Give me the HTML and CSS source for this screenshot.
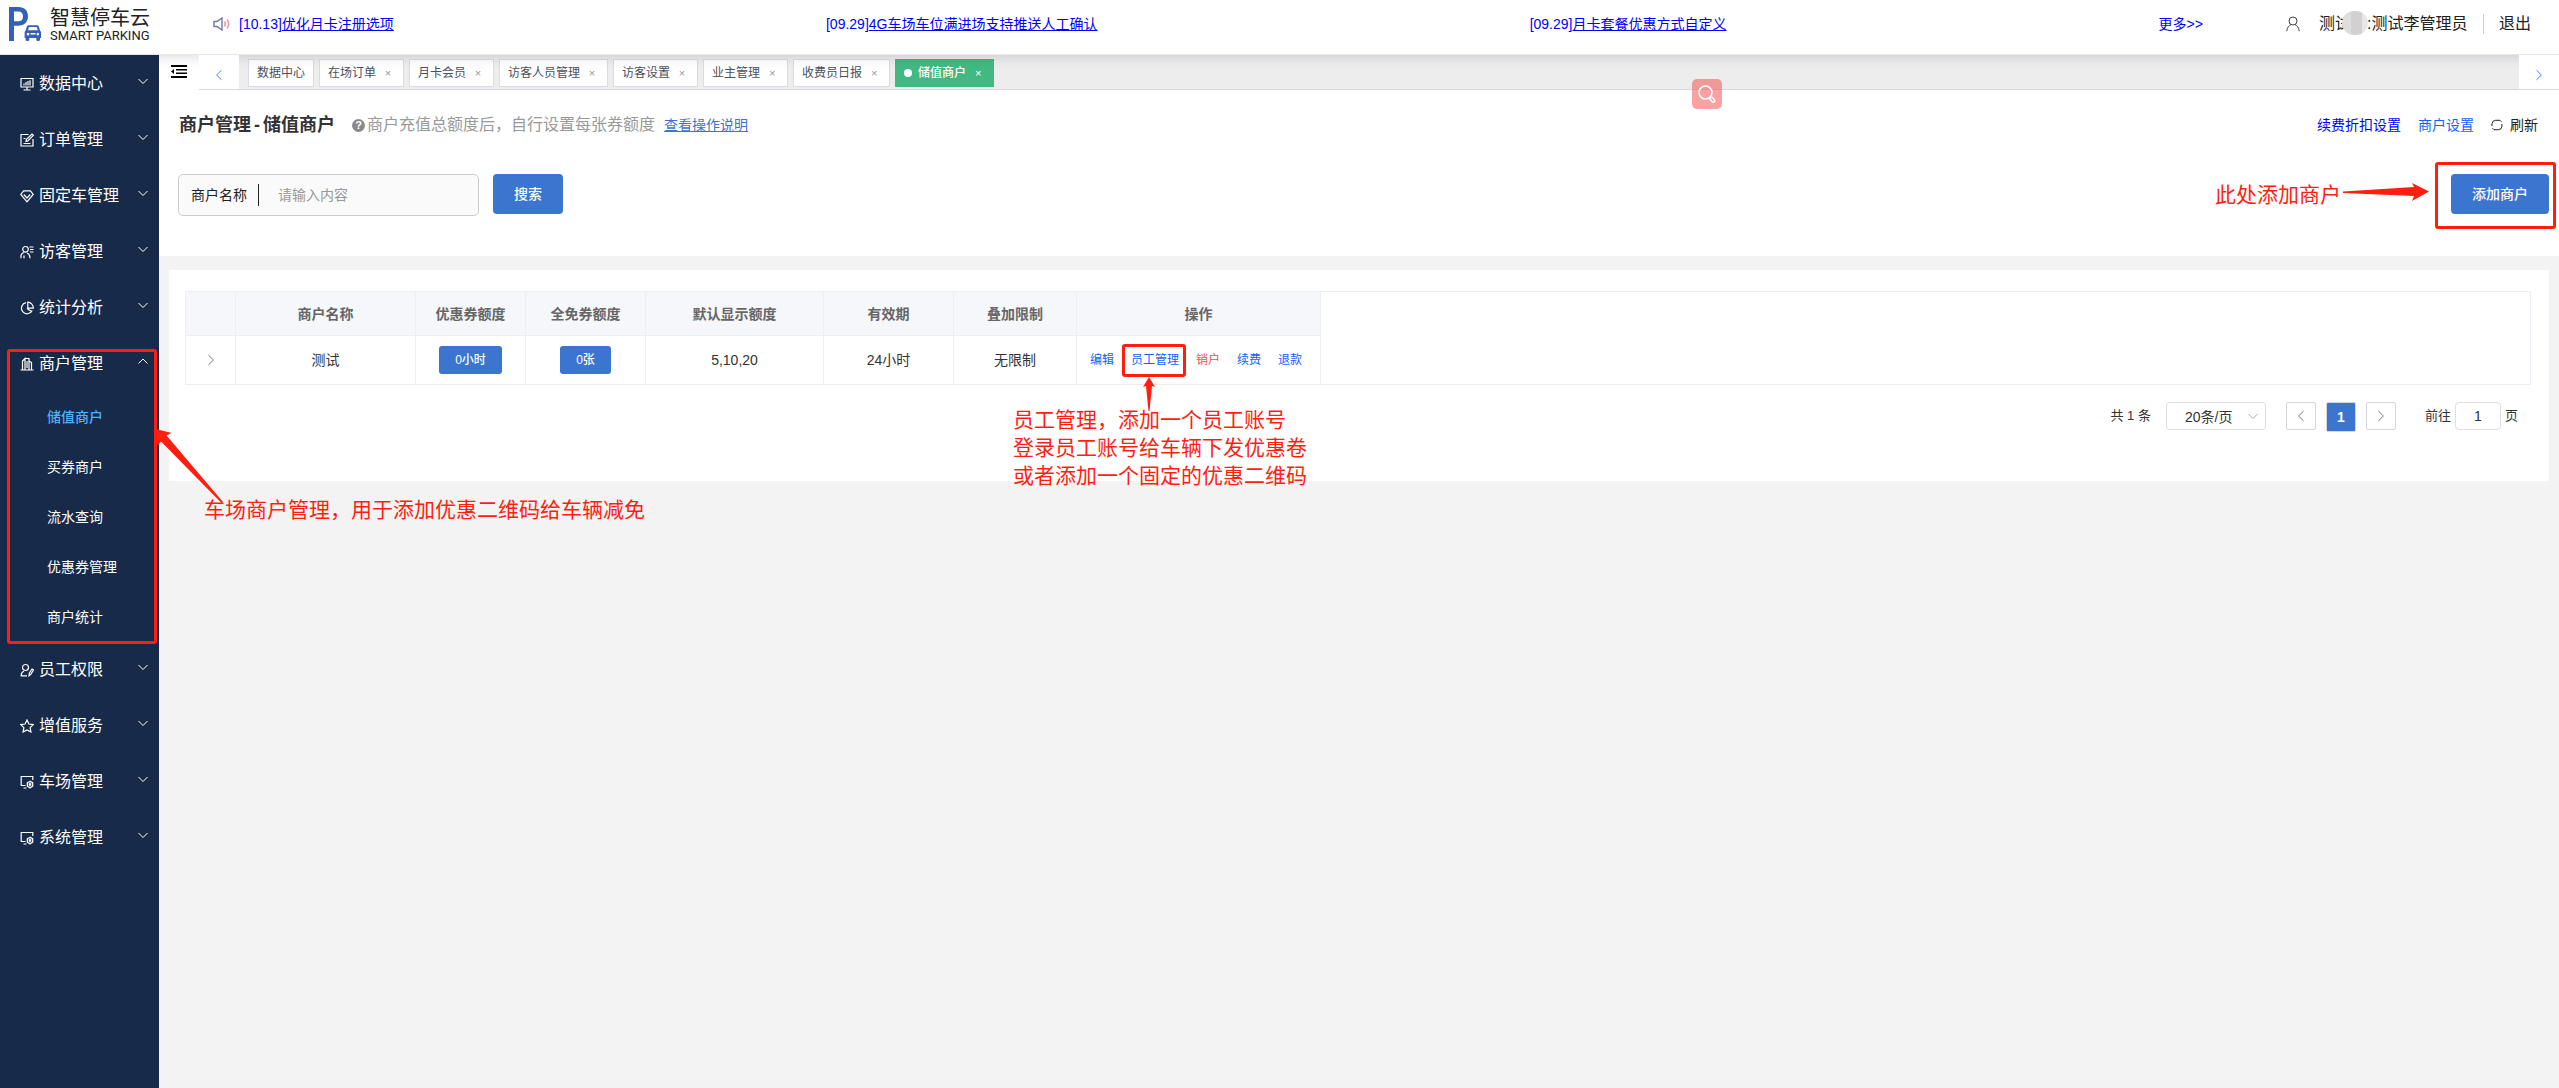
FILE: index.html
```html
<!DOCTYPE html>
<html lang="zh-CN">
<head>
<meta charset="utf-8">
<title>智慧停车云 - 储值商户</title>
<link rel="stylesheet" href="styles.css">
</head>
<body>
<svg class="defs" aria-hidden="true">
  <symbol id="down" viewBox="0 0 12 12"><path d="M1.500 4l4.500 4.500L10.500 4"/></symbol>
  <symbol id="up" viewBox="0 0 12 12"><path d="M1.500 8.500L6 4l4.500 4.500"/></symbol>
  <symbol id="left" viewBox="0 0 12 12"><path d="M8.500 1.200L3.600 6l4.900 4.800"/></symbol>
  <symbol id="right" viewBox="0 0 12 12"><path d="M3.500 1.200L8.400 6l-4.900 4.800"/></symbol>
  <symbol id="gearscreen" viewBox="0 0 14 14"><path d="M5.500 10.500H1.200V1.500h11.600V5M3.500 13h3"/><circle cx="10" cy="9.500" r="2.800"/><circle cx="10" cy="9.500" r="0.800"/><path d="M10 5.800v1M10 12.200v1.200M6.800 7.600l.9.500M12.300 10.900l.9.500M6.800 11.400l.9-.5M12.300 8.100l.9-.5"/></symbol>
</svg>

<header class="header">
  <a class="logo" href="#">
    <svg class="logo-mark" viewBox="0 0 32 34" aria-hidden="true">
      <path fill="#3560b8" fill-rule="evenodd" d="M0 0h9.500C15.500 0 19 3.500 19 9.300s-3.800 9.500-9.800 9.500H5V34H0zM5 4.600v9.700h4.200c3.200 0 4.800-1.700 4.800-4.900S12.300 4.600 9.200 4.600z"/>
      <path fill="#3560b8" fill-rule="evenodd" d="M19.500 18.200h8.600c.8 0 1.400.4 1.700 1.200l1.200 4.100c.7.500 1 1.200 1 2V31h-1v1.800c0 .7-.5 1.200-1.200 1.200h-1.300c-.7 0-1.200-.5-1.200-1.200V31h-7v1.800c0 .7-.5 1.200-1.200 1.200h-1.300c-.7 0-1.200-.5-1.200-1.200V31h-1v-5.500c0-.8.400-1.500 1.100-2l1.200-4.100c.3-.8.800-1.200 1.600-1.200zm.5 1.800l-1 3.300h9.800l-1-3.300zm-1 5.800a1.300 1.300 0 1 0 .01 0zm9.800 0a1.300 1.300 0 1 0 .01 0zM21.500 26v1.500h5V26z"/>
    </svg>
    <span class="logo-text"><span class="logo-cn">智慧停车云</span><span class="logo-en">SMART PARKING</span></span>
  </a>
  <svg class="speaker" viewBox="0 0 18 14" aria-hidden="true">
    <path fill="none" stroke="#7077b0" stroke-width="1.400" d="M1 4.500h3L9 1v12L4 9.500H1z"/>
    <path fill="none" stroke="#f29a9a" stroke-width="1.600" d="M11.500 4.500q1.600 2.500 0 5M14 2.500q3.200 4.500 0 9"/>
  </svg>
  <nav class="notices">
    <a href="#">[10.13]<u>优化月卡注册选项</u></a>
    <a href="#">[09.29]<u>4G车场车位满进场支持推送人工确认</u></a>
    <a href="#">[09.29]<u>月卡套餐优惠方式自定义</u></a>
    <a href="#">更多&gt;&gt;</a>
  </nav>
  <div class="account">
    <svg class="user-icon" viewBox="0 0 14 16" aria-hidden="true"><circle cx="7" cy="5" r="4"/><path d="M.8 15.200C1 11.500 3 9.300 5.200 8.600M13.200 15.200C13 11.500 11 9.300 8.800 8.600"/></svg>
    <span class="user-name">测试<span class="mask"></span>:测试李管理员</span>
    <a class="logout" href="#">退出</a>
  </div>
</header>

<div class="body">
  <aside class="sidebar">
    <nav>
      <a class="item" href="#"><svg class="icon" viewBox="0 0 14 14"><path d="M1 1.500h12v8.500H1zM3.500 13h7M7 10v3M4 8.500V6.500M6 8.500V5M8 8.500V4M10 8.500V3.200"/></svg>数据中心<svg class="caret"><use href="#down"/></svg></a>
      <a class="item" href="#"><svg class="icon" viewBox="0 0 14 14"><path d="M8.500 1.500H1v11.500h12V6M6 8.500l.3-2L12 1l1.400 1.300L7.800 8zM3.500 10.500h7M3.500 5.500h2"/></svg>订单管理<svg class="caret"><use href="#down"/></svg></a>
      <a class="item" href="#"><svg class="icon" viewBox="0 0 14 14"><path d="M3.600 1.800h6.800L13.200 5.500 7 12.800.8 5.500zM3.800 5.500L7 9l3.200-3.500"/></svg>固定车管理<svg class="caret"><use href="#down"/></svg></a>
      <a class="item" href="#"><svg class="icon" viewBox="0 0 14 14"><circle cx="5.500" cy="4.300" r="2.800"/><path d="M1 13.200V11q0-2.500 2.800-3.500M7 8.200q3 .8 3 5M9.500 2h4M10 4.500h3.500M10 7h3.500M4 10.500v2.700"/></svg>访客管理<svg class="caret"><use href="#down"/></svg></a>
      <a class="item" href="#"><svg class="icon" viewBox="0 0 14 14"><path d="M6 1.700A5.600 5.600 0 1 0 12.200 9.500M7.800 1.200v6h5.500A5.700 5.700 0 0 0 7.800 1.200zM7 7.500l4.800 3.300"/></svg>统计分析<svg class="caret"><use href="#down"/></svg></a>
      <div class="group">
        <a class="item" href="#"><svg class="icon" viewBox="0 0 14 14"><path d="M.5 13h13M2.500 13V4L5 1.500V13M5 1.500h4V13M9 4l2.500 1.500V13M7 4v7"/></svg>商户管理<svg class="caret"><use href="#up"/></svg></a>
        <a class="sub active" href="#">储值商户</a>
        <a class="sub" href="#">买券商户</a>
        <a class="sub" href="#">流水查询</a>
        <a class="sub" href="#">优惠券管理</a>
        <a class="sub" href="#">商户统计</a>
        <span class="frame frame-menu"></span>
        <svg class="arrow arrow-menu" viewBox="0 0 67 74"><path d="M0 0l15.500 4-5 2.500L67 73l-1.500 1L5 12.500 1.500 17z"/></svg>
        <p class="note note-menu">车场商户管理，用于添加优惠二维码给车辆减免</p>
      </div>
      <a class="item" href="#"><svg class="icon" viewBox="0 0 14 14"><circle cx="5.500" cy="4.500" r="3"/><path d="M7 12.800H1.200Q1 9.500 4 8M9 12.800l.3-2.500 2.700-4.300 1.500 1-2.700 4.400z"/></svg>员工权限<svg class="caret"><use href="#down"/></svg></a>
      <a class="item" href="#"><svg class="icon" viewBox="0 0 14 14"><path d="M7 1l1.900 4 4.400.6-3.200 3 .8 4.400L7 10.900 3.100 13l.8-4.400-3.200-3L5.100 5z"/></svg>增值服务<svg class="caret"><use href="#down"/></svg></a>
      <a class="item" href="#"><svg class="icon"><use href="#gearscreen"/></svg>车场管理<svg class="caret"><use href="#down"/></svg></a>
      <a class="item" href="#"><svg class="icon"><use href="#gearscreen"/></svg>系统管理<svg class="caret"><use href="#down"/></svg></a>
    </nav>
  </aside>

  <main class="main">
    <div class="tagbar">
      <button class="fold" type="button" aria-label="折叠菜单"><svg viewBox="0 0 16 13"><path fill="#000" d="M0 0h16v2H0zM5 4h11v1.500H5zM5 7.500h11V9H5zM0 11h16v2H0zM0 6.500L3 4v5z"/></svg></button>
      <button class="scroll" type="button" aria-label="向左"><svg class="chev"><use href="#left"/></svg></button>
      <div class="tags">
        <a class="tag" href="#">数据中心</a>
        <a class="tag" href="#">在场订单<span class="x">×</span></a>
        <a class="tag" href="#">月卡会员<span class="x">×</span></a>
        <a class="tag" href="#">访客人员管理<span class="x">×</span></a>
        <a class="tag" href="#">访客设置<span class="x">×</span></a>
        <a class="tag" href="#">业主管理<span class="x">×</span></a>
        <a class="tag" href="#">收费员日报<span class="x">×</span></a>
        <a class="tag current" href="#">储值商户<span class="x">×</span></a>
      </div>
      <button class="scroll" type="button" aria-label="向右"><svg class="chev"><use href="#right"/></svg></button>
      <button class="lens" type="button" aria-label="搜图"><svg viewBox="0 0 18 18"><circle cx="7.500" cy="7.500" r="6.500"/><path d="M12 12.500q1.500-1 2.500 0l2 2.500q.6 1.500-.6 2.200-1.300.4-2-.7l-2-2.500z"/></svg></button>
    </div>

    <section class="top">
      <div class="title-row">
        <h1>商户管理<span class="dash">-</span>储值商户</h1>
        <span class="help">?</span>
        <span class="hint">商户充值总额度后，自行设置每张券额度</span>
        <a class="doc" href="#">查看操作说明</a>
        <div class="tools">
          <a class="renew" href="#">续费折扣设置</a>
          <a class="setup" href="#">商户设置</a>
          <button class="refresh" type="button"><svg viewBox="0 0 12 12"><path d="M1 7V4.800Q1.300 1.500 4.500 1.300H9l1.500 1.500M11 5v2.200Q10.700 10.500 7.500 10.700H3L1.500 9.200"/></svg>刷新</button>
        </div>
      </div>
      <form class="search">
        <div class="field"><label for="name">商户名称</label><input id="name" type="text" placeholder="请输入内容"></div>
        <button class="btn btn-search" type="button">搜索</button>
        <div class="add">
          <p class="note note-add">此处添加商户</p>
          <svg class="arrow arrow-add" viewBox="0 0 86 18"><path d="M0 8.500L71 4 69 0l17 8.500L69 18l2-5L0 10z"/></svg>
          <button class="btn btn-add" type="button">添加商户</button>
          <span class="frame frame-add"></span>
        </div>
      </form>
    </section>

    <section class="card">
      <div class="table-box">
        <table>
          <colgroup><col class="c1"><col class="c2"><col class="c3"><col class="c4"><col class="c5"><col class="c6"><col class="c7"><col class="c8"></colgroup>
          <thead><tr><th></th><th>商户名称</th><th>优惠券额度</th><th>全免券额度</th><th>默认显示额度</th><th>有效期</th><th>叠加限制</th><th>操作</th></tr></thead>
          <tbody><tr>
            <td><svg class="expand"><use href="#right"/></svg></td>
            <td>测试</td>
            <td><button class="pill" type="button">0小时</button></td>
            <td><button class="pill" type="button">0张</button></td>
            <td>5,10,20</td>
            <td>24小时</td>
            <td>无限制</td>
            <td><div class="ops">
              <a href="#">编辑</a>
              <span class="mark"><a href="#">员工管理</a><span class="frame frame-staff"></span>
                <svg class="arrow arrow-staff" viewBox="0 0 12 34"><path d="M6 0l6 10-3-1L6.500 34h-1L3 9l-3 1z"/></svg>
                <span class="note note-staff">员工管理，添加一个员工账号<br>登录员工账号给车辆下发优惠卷<br>或者添加一个固定的优惠二维码</span></span>
              <a class="danger" href="#">销户</a>
              <a href="#">续费</a>
              <a href="#">退款</a>
            </div></td>
          </tr></tbody>
        </table>
      </div>
      <div class="pager">
        <span class="total">共 1 条</span>
        <span class="size"><select aria-label="每页条数"><option>20条/页</option></select><svg class="size-caret"><use href="#down"/></svg></span>
        <button class="page" type="button" aria-label="上一页"><svg viewBox="0 0 12 12"><use href="#left"/></svg></button>
        <button class="page on" type="button">1</button>
        <button class="page" type="button" aria-label="下一页"><svg viewBox="0 0 12 12"><use href="#right"/></svg></button>
        <label class="jump">前往<input type="text" value="1">页</label>
      </div>
    </section>
  </main>
</div>
</body>
</html>
```

FILE: styles.css
```css
* { box-sizing: border-box; }
body {
  margin: 0;
  min-height: 100vh;
  display: flex;
  flex-direction: column;
  font: 14px/20px "Liberation Sans", "Noto Sans CJK SC", sans-serif;
  color: #222;
  background: #f3f3f3;
}
a { color: inherit; text-decoration: none; }
button, input, select { font: inherit; color: inherit; margin: 0; }
button { border: 0; padding: 0; background: none; cursor: pointer; }
h1, p { margin: 0; }
svg { display: block; fill: none; stroke: currentColor; }
.defs { position: absolute; width: 0; height: 0; }

/* header */
.header {
  position: relative;
  z-index: 1;
  height: 55px;
  display: flex;
  align-items: center;
  padding-bottom: 6px;
  background: #fff;
  border-bottom: 1px solid #e6e6ee;
  box-shadow: 0 2px 12px rgba(0, 0, 0, .14);
}
.logo { width: 213px; padding-left: 9px; display: flex; align-items: center; gap: 9px; }
.logo-mark { width: 32px; height: 34px; stroke: none; }
.logo-text { display: flex; flex-direction: column; padding-top: 3px; color: #222; }
.logo-cn { font-size: 20px; line-height: 20px; }
.logo-en { font: 13px/16px Roboto, sans-serif; }
.speaker { width: 18px; height: 14px; margin-right: 8px; }
.notices { flex: 1; display: flex; justify-content: space-between; color: #0000ff; }
.account { display: flex; align-items: center; margin-left: 83px; padding-right: 28px; font-size: 16px; }
.user-icon { width: 14px; height: 16px; margin-right: 19px; color: #444; }
.user-name { position: relative; width: 148px; white-space: nowrap; }
.mask {
  display: inline-block;
  width: 16px;
  height: 20px;
  vertical-align: top;
}
.mask::before {
  content: "";
  position: absolute;
  left: 23px;
  top: -3px;
  width: 26px;
  height: 24px;
  border-radius: 12px;
  background: linear-gradient(90deg, #ddd 9px, #d2d0d0 9px, #d2d0d0 20px, #e8e8e8 20px);
}
.logout { margin-left: 16px; padding-left: 15px; border-left: 1px solid #ccc; }

.body { flex: 1; display: flex; }

/* sidebar */
.sidebar { position: relative; z-index: 2; flex: none; width: 159px; background: #172a49; color: #fff; }
.item { display: flex; align-items: center; height: 56px; padding: 2px 10px 0 20px; font-size: 16px; }
.icon { width: 14px; height: 14px; margin-right: 5px; stroke-width: 1.2; }
.caret { width: 12px; height: 12px; margin: 0 0 6px auto; }
.group { position: relative; }
.sub { display: flex; align-items: center; height: 50px; padding: 2px 0 0 47px; }
.sub.active { color: #4fb0ff; font-weight: 500; }

/* annotations over the page */
.frame { position: absolute; border: 3px solid #ff1e10; border-radius: 3px; pointer-events: none; }
.arrow { position: absolute; fill: #ff1e10; stroke: none; }
.note { position: absolute; font-size: 21px; line-height: 28px; color: #ff1e10; white-space: nowrap; text-align: left; }
.frame-menu { left: 7px; top: 14px; width: 150px; height: 295px; }
.arrow-menu { left: 156px; top: 94px; width: 67px; height: 74px; }
.note-menu { left: 204px; top: 161px; }
.frame-add { inset: -12px -7px -15px -16px; }
.arrow-add { right: 120px; top: 9px; width: 86px; height: 18px; }
.note-add { right: 208px; top: 7px; }
.frame-staff { inset: -2px -7px -3px -9px; }
.arrow-staff { left: 12px; top: 31px; width: 12px; height: 34px; }
.note-staff { left: -118px; top: 60px; }

/* tag bar */
.main { flex: 1; min-width: 0; }
.tagbar { position: relative; display: flex; height: 35px; background: #ededed; border-bottom: 1px solid #d9d9e3; }
.fold { width: 40px; background: #fff; padding: 0 12px 3px; margin-bottom: -1px; }
.fold svg { width: 16px; height: 13px; stroke: none; }
.scroll { position: relative; z-index: 2; width: 40px; background: #fff; color: #4a7bff; }
.chev { width: 12px; height: 12px; margin: 5px auto 0; }
.tags { flex: 1; display: flex; gap: 5px; padding: 4px 9px 2px; font-size: 12px; }
.tag { display: flex; align-items: center; height: 28px; padding: 0 8px; border: 1px solid #d8dce5; background: #fff; color: #495060; }
.x { width: 8px; margin: 0 3px 0 8px; color: #999; font-size: 11px; text-align: center; }
.tag.current { background: #42b983; border-color: #42b983; color: #fff; font-weight: 500; }
.tag.current::before { content: ""; width: 8px; height: 8px; margin-right: 6px; border-radius: 4px; background: #fff; }
.tag.current .x { color: #fff; }
.lens {
  position: absolute;
  z-index: 3;
  right: 837px;
  top: 24px;
  width: 30px;
  height: 30px;
  padding: 6px;
  border-radius: 5px;
  background: rgba(244, 70, 70, .5);
  color: #fff;
}
.lens svg { width: 18px; height: 18px; stroke-width: 1.5; }

/* heading and search */
.top { height: 166px; padding: 24px 10px 0 20px; background: #fff; }
.title-row { display: flex; align-items: center; height: 22px; }
h1 { font-size: 18px; line-height: 22px; color: #333; }
.dash { margin: 0 3px; }
.help { width: 13px; height: 13px; margin: 0 2px 0 17px; border-radius: 7px; background: #8a8a8a; color: #fff; font-size: 11px; font-weight: 700; line-height: 13px; text-align: center; }
.hint { font-size: 16px; color: #999; }
.doc { margin-left: 9px; color: #3b75cf; text-decoration: underline; }
.tools { display: flex; align-items: center; gap: 17px; margin-left: auto; padding-right: 11px; }
.renew { color: #0000ff; }
.setup { color: #0f62fe; }
.refresh { display: flex; align-items: center; gap: 7px; }
.refresh svg { width: 12px; height: 12px; }
.search { display: flex; align-items: flex-start; margin-top: 38px; }
.field { display: flex; align-items: center; width: 301px; height: 42px; margin: 0 14px 0 -1px; padding-left: 12px; border: 1px solid #ccc; border-radius: 5px; background: #fafafa; }
.field label { padding-right: 11px; border-right: 1px solid #222; line-height: 22px; }
.field input { flex: 1; min-width: 0; padding: 0 0 0 19px; border: 0; outline: 0; background: none; }
.field input::placeholder { color: #999; opacity: 1; }
.btn { height: 40px; border-radius: 4px; background: #3b75cf; color: #fff; font-weight: 500; }
.btn-search { width: 70px; }
.add { position: relative; margin-left: auto; }
.btn-add { display: block; width: 98px; }

/* table card */
.card { margin: 14px 10px 0; height: 211px; padding: 21px 18px 0 16px; background: #fff; }
.table-box { border: 1px solid #ebeef5; }
table { width: 1135px; table-layout: fixed; border-collapse: separate; border-spacing: 0; text-align: center; }
.c1 { width: 50px; }
.c2 { width: 180px; }
.c3 { width: 110px; }
.c4 { width: 120px; }
.c5 { width: 178px; }
.c6 { width: 130px; }
.c7 { width: 123px; }
.c8 { width: 244px; }
th, td { padding: 0; border-right: 1px solid #ebeef5; }
th { height: 44px; border-bottom: 1px solid #ebeef5; background: #f5f7fb; color: #666; font-weight: 700; }
td { height: 48px; color: #333; }
.expand { width: 12px; height: 12px; margin: 0 auto; color: #777; }
.pill { height: 28px; padding: 0 16px; border-radius: 3px; background: #3b75cf; color: #fff; font-size: 12px; font-weight: 500; vertical-align: middle; }
.ops { display: flex; justify-content: center; gap: 17px; padding-right: 5px; font-size: 12px; line-height: 28px; color: #0f62fe; }
.mark { position: relative; }
.danger { color: #f34d4d; }

/* pager */
.pager { display: flex; align-items: flex-start; justify-content: flex-end; margin-top: 17px; padding-right: 13px; font-size: 13px; line-height: 28px; color: #333; }
.size { position: relative; width: 100px; margin: 0 20px 0 15px; }
.size select { display: block; width: 100px; height: 28px; padding: 0 0 0 18px; appearance: none; border: 1px solid #dcdfe6; border-radius: 3px; background: #fff; font-size: 14px; }
.size-caret { position: absolute; right: 7px; top: 8px; width: 12px; height: 12px; color: #aaa; pointer-events: none; }
.page { width: 30px; height: 28px; margin-right: 10px; border: 1px solid #d4d7de; border-radius: 2px; color: #777; }
.page svg { width: 12px; height: 12px; margin: 0 auto; }
.page.on { height: 30px; background: #3b75cf; color: #fff; font-weight: 700; font-size: 14px; }
.jump { display: flex; margin-left: 19px; }
.jump input { width: 46px; height: 28px; margin: 0 4px; padding: 0; border: 1px solid #dcdfe6; border-radius: 4px; text-align: center; font-size: 14px; }
```
